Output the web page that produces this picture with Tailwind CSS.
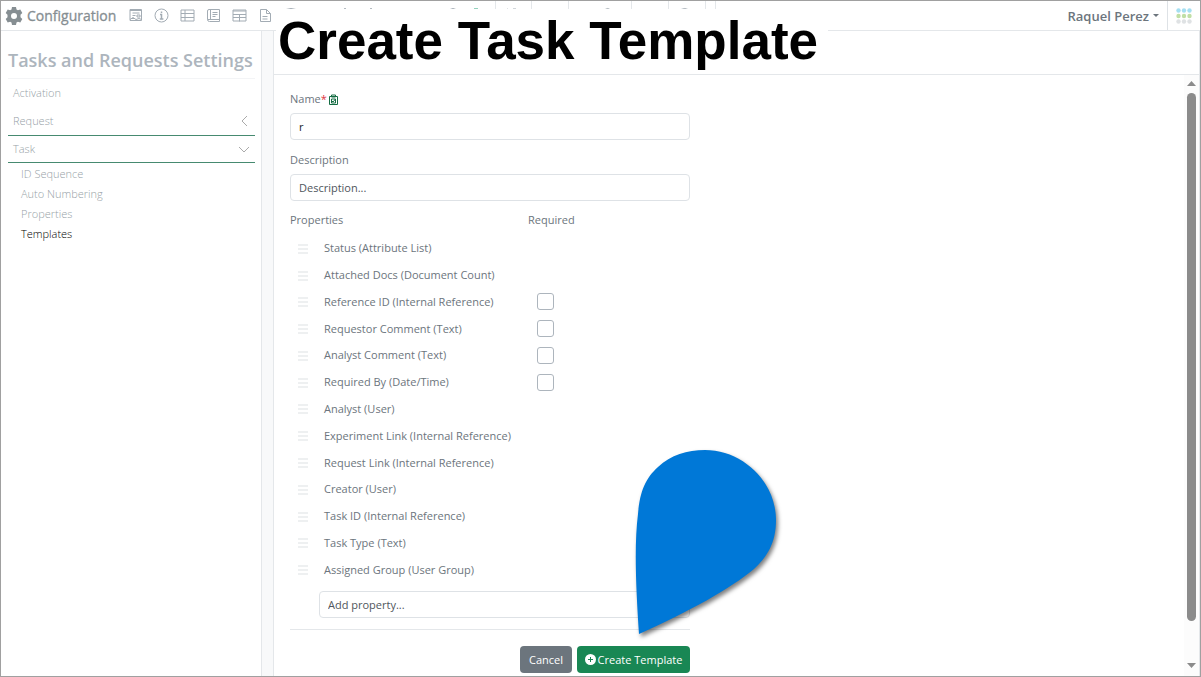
<!DOCTYPE html>
<html lang="en">
  <head>
    <meta charset="UTF-8" />
    <meta name="viewport" content="width=device-width, initial-scale=1.0" />
    <title>Configuration | Tasks and Requests Settings</title>
    <script src="https://cdn.jsdelivr.net/npm/@tailwindcss/browser@4"></script>
  </head>
  <body class="relative h-screen flex flex-col overflow-hidden border border-[#a0a0a0] bg-white font-['Open_Sans','Noto_Sans',sans-serif] text-[11px] leading-4 text-[#6c757d]">
    <!-- Top bar -->
    <header class="flex h-[30px] shrink-0 items-center border-b border-[#e4e7ea]">
      <svg class="ml-1 size-[18px] shrink-0" viewBox="0 0 18 18" fill="#868e92">
        <path fill-rule="evenodd" d="M7 0h4l.5 2.500 1.400.8L15.300 2.500l2 3.500L15.500 7.700v2.600l1.800 1.700-2 3.500-2.400-.8-1.400.8L11 18H7l-.5-2.500-1.400-.8-2.400.8-2-3.500 1.800-1.700V7.700L.7 6l2-3.500 2.400.8 1.400-.8zM9 6a3 3 0 1 0 0 6 3 3 0 0 0 0-6z" />
      </svg>
      <h1 class="ml-1 w-[89px] text-[14px] font-medium leading-5 text-[#868e92] [-webkit-text-stroke:0.3px]">Configuration</h1>
      <nav class="ml-3 flex shrink-0 items-center gap-[11px] text-[#a3acb4]" aria-label="Sections">
        <button aria-label="Forms">
          <svg class="size-[15px]" viewBox="0 0 15 15" fill="none" stroke="currentColor">
            <path d="M2 1.500h11.500v11H2zM2 2.500h11M4.500 5h7M4.500 7.500h3M2 11.500l3-2 3 2 3-1 2.500 1M9 7h3v2H9zM4 10.500h3" />
          </svg>
        </button>
        <button aria-label="Info">
          <svg class="size-[15px]" viewBox="0 0 15 15" fill="none" stroke="currentColor">
            <circle cx="7.500" cy="7.500" r="6.500" />
            <path stroke-width="1.500" d="M6 6.500h1.500v4.500M5.800 11h3.600M7.500 3.500v1.500" />
          </svg>
        </button>
        <button aria-label="Lists">
          <svg class="size-[15px]" viewBox="0 0 15 15" fill="none" stroke="currentColor">
            <path d="M1 2h13v11H1zM5 2v11M1 5.500h13M1 9.500h13" />
          </svg>
        </button>
        <button aria-label="Notebook">
          <svg class="size-[15px]" viewBox="0 0 15 15" fill="none" stroke="currentColor">
            <path d="M3 1.500h10.500v12H3.500a2 2 0 0 1-2-2V3A1.500 1.500 0 0 1 3 1.500zM1.500 11.500h12M4.500 1.500v9.500M6.500 4.500h5M6.500 6.500h5M6.500 8.500h3" />
          </svg>
        </button>
        <button aria-label="Tables">
          <svg class="size-[15px]" viewBox="0 0 15 15" fill="none" stroke="currentColor">
            <path d="M1 2h13v11H1zM1 3h13M1 6.500h13M1 9.500h13M7.500 6.500v7" />
          </svg>
        </button>
        <button aria-label="Documents">
          <svg class="size-[15px]" viewBox="0 0 15 15" fill="none" stroke="currentColor">
            <path d="M2.500 1.500h6l4 4v8h-10zM8.500 1.500v4h4M4.500 8.500h5M4.500 11h5" />
          </svg>
        </button>
        <svg class="h-[29px] w-[440px]" viewBox="0 0 440 29" fill="none" stroke="currentColor" aria-hidden="true">
          <path stroke="#e4e7ea" d="M211.500 0v29M247.500 0v29M284.500 0v29M347.500 0v29M384.500 0v29M421.500 0v29M431.500 0v29" />
          <path d="M2 8.500q5-2 10 0M60 9l1-2 1 2M86 9l1-2 1 2M112 8.500h4M166 8.500q3-2 6 0M223 8l3 1M229 8l3 0M301 8.500h4M321 8.500q3-2 5 0M360 8.500h4M397 8.500q4-2 7 0" />
          <path stroke="#27a57b" stroke-width="2" d="M190 8.500h4" />
        </svg>
      </nav>
      <button class="ml-auto flex items-center gap-1 pr-2 text-[13px] font-semibold leading-5">
        Raquel Perez
        <svg class="h-[3px] w-[6px]" viewBox="0 0 6 3" fill="currentColor"><path d="M0 0h6L3 3z" /></svg>
      </button>
      <button class="flex h-full w-[33px] items-center justify-center border-l border-[#dee2e6]" aria-label="Apps">
        <svg class="size-4" viewBox="0 0 16 16">
          <g fill="#a5dff2"><circle cx="2.500" cy="2.500" r="2.200" /><circle cx="8" cy="2.500" r="2.200" /><circle cx="13.500" cy="2.500" r="2.200" /></g>
          <g fill="#c0dfa6"><circle cx="2.500" cy="8" r="2.200" /><circle cx="8" cy="8" r="2.200" /><circle cx="13.500" cy="8" r="2.200" /></g>
          <g fill="#dfe2e4"><circle cx="2.500" cy="13.500" r="2.200" /><circle cx="8" cy="13.500" r="2.200" /><circle cx="13.500" cy="13.500" r="2.200" /></g>
        </svg>
      </button>
    </header>

    <div class="flex min-h-0 flex-1 bg-[#f8f9fa]">
      <!-- Settings menu -->
      <aside class="w-[261px] shrink-0 border-r border-[#e4e7ea] bg-white pl-[7px] pr-[6px] pt-4 text-[#adb5bd]">
        <h2 class="border-b border-[#f3f4f6] pb-1 text-[18px] font-semibold leading-[27px] whitespace-nowrap">Tasks and Requests Settings</h2>
        <nav class="font-light text-[#979fa7]">
          <a href="#" class="block px-[5px] py-[6px]">Activation</a>
          <a href="#" class="flex h-[29px] items-center justify-between border-b border-[#468a70] px-[5px]">
            Request
            <svg class="size-3" viewBox="0 0 12 12" fill="none" stroke="#aaa"><path d="M9 1 4 6l5 5" /></svg>
          </a>
          <a href="#" class="flex h-[27px] items-center justify-between border-b border-[#468a70] px-[5px]">
            Task
            <svg class="size-3" viewBox="0 0 12 12" fill="none" stroke="#aaa"><path d="m1 4 5 5 5-5" /></svg>
          </a>
          <div class="flex flex-col gap-1 pl-[13px] pt-[3px]">
            <a href="#">ID Sequence</a>
            <a href="#">Auto Numbering</a>
            <a href="#">Properties</a>
            <a href="#" class="text-black">Templates</a>
          </div>
        </nav>
      </aside>

      <main class="ml-[11px] flex min-w-0 flex-1 flex-col border-x border-[#e4e7ea] bg-white">
        <div class="h-11 shrink-0 border-b border-[#e4e7ea]"></div>
        <div class="flex min-h-0 flex-1">
          <form class="min-w-0 flex-1 overflow-hidden pl-4 pt-4">
            <div class="w-[400px]">
              <label for="name" class="flex items-center gap-[2px]">
                <span>Name<span class="text-[#dc3545]">*</span></span>
                <svg class="h-[11px] w-[9px]" viewBox="0 0 9 11" fill="none" stroke="#146c43">
                  <path d="M.5 2.500h8v8h-8zM2.500 1h4v2h-4zM2.500 5h4v4h-4zM3 7l1 1 2.500-3" />
                </svg>
              </label>
              <input id="name" type="text" value="r" class="mt-[6px] block h-[27px] w-full rounded border border-[#dee2e6] px-2 text-[#212529]" />

              <label for="description" class="mt-3 block">Description</label>
              <input id="description" type="text" placeholder="Description..." class="mt-[6px] block h-[27px] w-full rounded border border-[#dee2e6] px-2 placeholder:text-[#50565c]" />

              <!-- Template properties -->
              <table class="mt-[11px] h-[371px] w-full text-left">
                <thead>
                  <tr class="h-[23px]">
                    <th colspan="2" class="align-top font-normal">Properties</th>
                    <th class="w-[162px] align-top font-normal">Required</th>
                  </tr>
                </thead>
                <tbody id="properties"></tbody>
              </table>

              <div class="pl-[29px] pt-[8px]">
                <input type="text" aria-label="Add property" placeholder="Add property..." class="block h-[27px] w-full rounded border border-[#dee2e6] px-2 placeholder:text-[#50565c]" />
              </div>
              <hr class="mt-[11px] border-[#e4e7ea]" />
              <div class="mt-4 flex justify-end gap-[5px] text-white">
                <button type="button" class="h-[27px] w-[52px] rounded bg-[#6c757d]">Cancel</button>
                <button type="submit" class="flex h-[27px] w-[113px] items-center justify-center gap-[2px] rounded bg-[#198754] whitespace-nowrap">
                  <svg class="size-[11px] shrink-0" viewBox="0 0 11 11"><circle cx="5.500" cy="5.500" r="5.500" fill="#fff" /><path stroke="#198754" d="M3 5.500h5M5.500 3v5" /></svg>
                  Create Template
                </button>
              </div>
            </div>
          </form>

          <!-- Scrollbar -->
          <div class="flex w-[15px] shrink-0 flex-col items-center bg-[#fcfcfc] pb-2 pt-[6px]" aria-hidden="true">
            <svg class="h-[5px] w-[9px]" viewBox="0 0 9 5" fill="#8b8b8b"><path d="M0 5h9L4.500 0z" /></svg>
            <div class="mb-[42px] mt-[7px] w-[9px] flex-1 rounded-full bg-[#8b8b8b]"></div>
            <svg class="h-[5px] w-[9px]" viewBox="0 0 9 5" fill="#8b8b8b"><path d="M0 0h9L4.500 5z" /></svg>
          </div>
        </div>
      </main>
    </div>

    <!-- Caption and pointer over the page -->
    <div class="absolute left-[275px] top-2 h-[62px] w-[552px] bg-white pl-[2px] font-['Liberation_Sans',sans-serif] text-[53px] font-bold leading-[64px] whitespace-nowrap text-black">Create Task Template</div>
    <svg class="absolute left-[619px] top-[439px] h-[210px] w-[170px] drop-shadow-[2px_3px_2px_rgba(0,0,0,0.5)]" viewBox="0 0 170 210" fill="#0078d7" aria-hidden="true">
      <path d="M19 194C16 150 14 105 18 74C20 50 26 38 38 27C51 15 67 10 85 10C123 10 156 42 156 80C156 103 147 117 134 129C110 149 70 171 19 194Z" />
    </svg>

    <script>
      const properties = [
        ["Status (Attribute List)", false],
        ["Attached Docs (Document Count)", false],
        ["Reference ID (Internal Reference)", true],
        ["Requestor Comment (Text)", true],
        ["Analyst Comment (Text)", true],
        ["Required By (Date/Time)", true],
        ["Analyst (User)", false],
        ["Experiment Link (Internal Reference)", false],
        ["Request Link (Internal Reference)", false],
        ["Creator (User)", false],
        ["Task ID (Internal Reference)", false],
        ["Task Type (Text)", false],
        ["Assigned Group (User Group)", false],
      ];

      document.getElementById("properties").innerHTML = properties
        .map(
          ([label, optional], i) => `
        <tr class="h-[26px]">
          <td class="w-[34px] pl-2">
            <svg class="block h-[11px] w-[10px]" viewBox="0 0 10 11" stroke="#e9ebed" stroke-width="1.500"><path d="M0 2h10M0 6h10M0 10h10" /></svg>
          </td>
          <td><label for="required-${i}">${label}</label></td>
          <td class="pl-[9px]">${
            optional
              ? `<input type="checkbox" id="required-${i}" class="block size-[17px] appearance-none rounded-[3px] border border-[#adb5bd] bg-white" />`
              : ""
          }</td>
        </tr>`
        )
        .join("");
    </script>
  </body>
</html>
